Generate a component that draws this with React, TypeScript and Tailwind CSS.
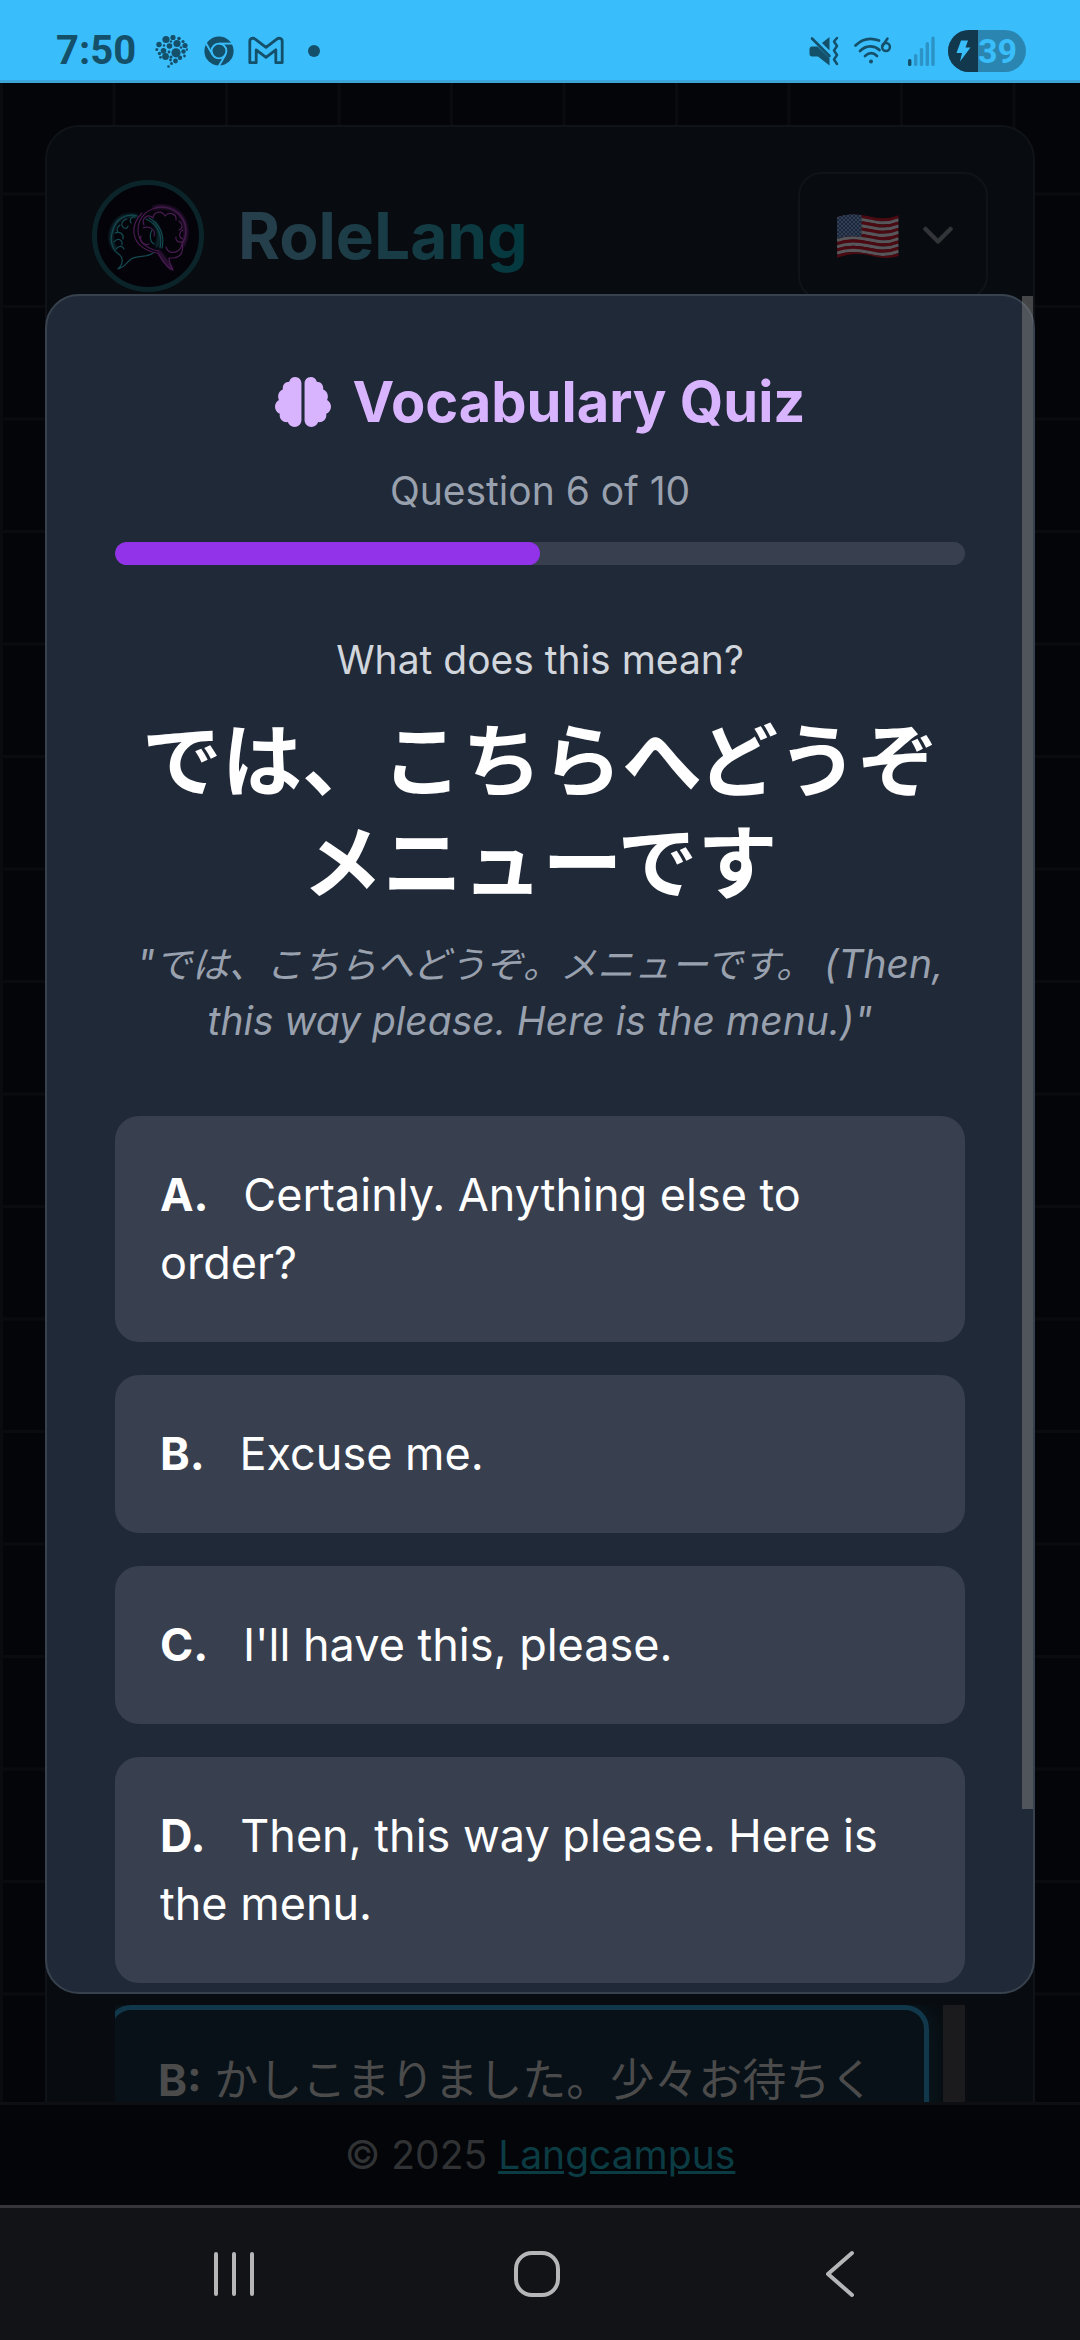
import React from "react";
import { FaBrain } from "react-icons/fa";

const CURRENT = 6;
const TOTAL = 10;

const OPTIONS = [
  { letter: "A", text: "Certainly. Anything else to order?" },
  { letter: "B", text: "Excuse me." },
  { letter: "C", text: "I'll have this, please." },
  { letter: "D", text: "Then, this way please. Here is the menu." },
];

const BUBBLE_DOTS: [number, number, number][] = [
  [11, 4.5, 3.6], [18, 2.5, 2.6], [24, 3.5, 1.8], [28, 6.5, 1.6], [4, 9.5, 2.7],
  [14.5, 11, 2.8], [22, 8.5, 3.6], [30, 10.5, 2.6], [1.8, 14.5, 1.5], [8.5, 15.8, 2.8],
  [21, 17.8, 4.6], [28.5, 16.5, 2.2], [32, 14.5, 1.2], [4.5, 18.5, 1.7], [10.5, 21.5, 3.4],
  [5.5, 22.3, 1.4], [16, 22, 1.6], [25, 22.8, 2.2], [20.5, 26, 2.4], [29.5, 21, 1.4],
  [15.5, 25, 1.4], [16.5, 28.5, 1.5], [13.5, 31.5, 1.3], [9, 10.5, 1.2], [16, 6.5, 1.2], [14, 17, 1.4], [26, 12.5, 1.3],
];

function BubbleIcon() {
  return (
    <svg viewBox="0 0 33 33" className="h-[33px] w-[33px]" fill="#14506a" aria-hidden="true">
      {BUBBLE_DOTS.map(([x, y, r], i) => (
        <circle key={i} cx={x} cy={y} r={r} />
      ))}
    </svg>
  );
}

function ChromeIcon() {
  return (
    <svg viewBox="0 0 30 30" className="h-[30px] w-[30px]" aria-hidden="true">
      <circle cx="15" cy="15" r="14.6" fill="#14506a" />
      <g stroke="#3abdfb" strokeWidth="1.9" fill="none">
        <circle cx="15" cy="15" r="7.4" />
        <path d="M15 7.6H29" />
        <path d="M15 7.6H29" transform="rotate(120 15 15)" />
        <path d="M15 7.6H29" transform="rotate(240 15 15)" />
      </g>
    </svg>
  );
}

function GmailIcon() {
  return (
    <svg viewBox="0 0 36 30" className="h-[30px] w-[36px]" fill="none" stroke="#14506a" strokeWidth="2.8" strokeLinejoin="round" aria-hidden="true">
      <path d="M1.8 5.5v21.2h6.4V13.8L18 21.3l9.8-7.5v12.9h6.4V5.5c0-3.4-3.4-4-5.4-2.4L18 11.4 7.2 3.1C5.200 1.500 1.800 2.100 1.800 5.500z" />
    </svg>
  );
}

function MuteIcon() {
  return (
    <svg viewBox="0 0 30 30" className="h-[30px] w-[30px]" aria-hidden="true">
      <path d="M3 10.500h5.500L20.500 22v7.500L9 20.500H3c-1.500 0-2.500-1-2.500-2.500v-5c0-1.500 1-2.500 2.500-2.500z" fill="#14506a" />
      <path d="M20.500 1v13.500l-7.500-7.500z" fill="#14506a" />
      <path d="M3 2.500l17.500 17.500" stroke="#14506a" strokeWidth="2.600" strokeLinecap="round" />
      <path d="M28 2l-3 3.500 3 4.500-3 4.500 3 4.500-3 4.500 3 4.500" stroke="#14506a" strokeWidth="2.500" fill="none" strokeLinecap="round" strokeLinejoin="round" />
    </svg>
  );
}

function WifiIcon() {
  return (
    <svg viewBox="0 0 38 30" className="h-[30px] w-[38px]" fill="none" stroke="#14506a" strokeWidth="2.700" strokeLinecap="round" aria-hidden="true">
      <path d="M1.500 9.500C8.500 2.500 17 1.500 25 4.500" />
      <path d="M6 15C12 9 20 9 25.500 14" />
      <path d="M11 20c4-3.500 8.500-3.500 12 0" />
      <circle cx="17" cy="25.500" r="2" fill="#14506a" stroke="none" />
      <circle cx="32" cy="11" r="3.900" strokeWidth="2.500" />
      <path d="M28.300 10.200L33.500 2.500" strokeWidth="2.500" />
    </svg>
  );
}

function SignalIcon() {
  return (
    <svg viewBox="0 0 28 30" className="h-[30px] w-[28px]" aria-hidden="true">
      <rect x="1" y="23" width="3.400" height="7" rx="1.500" fill="#14506a" />
      <rect x="7" y="18" width="3.400" height="12" rx="1.500" fill="#2b93c6" />
      <rect x="12.800" y="12" width="3.400" height="18" rx="1.500" fill="#2b93c6" />
      <rect x="18.600" y="6" width="3.400" height="24" rx="1.500" fill="#2b93c6" />
      <rect x="24.300" y="0.500" width="3.400" height="29.500" rx="1.500" fill="#2b93c6" />
    </svg>
  );
}

function StatusBar() {
  return (
    <div className="flex h-[83px] items-center justify-between border-b-[3px] border-[#3da5d9] bg-[#3abdfb] pt-[22px] pr-[54px] pl-[56px]">
      <div className="flex items-center">
        <span className="mr-[19px] font-['Roboto',sans-serif] text-[40px] leading-none font-bold text-[#14506a]">7:50</span>
        <div className="mr-4"><BubbleIcon /></div>
        <div className="mr-[14px]"><ChromeIcon /></div>
        <GmailIcon />
        <span className="ml-6 h-3 w-3 rounded-full bg-[#14506a]" />
      </div>
      <div className="flex items-center">
        <div className="mr-[15px]"><MuteIcon /></div>
        <div className="mr-[15px]"><WifiIcon /></div>
        <div className="mr-[13px]"><SignalIcon /></div>
        <div className="flex h-[42px] w-[78px] items-center overflow-hidden rounded-full bg-[#2a86b1]">
          <div className="flex h-full w-[30px] shrink-0 items-center justify-center bg-[#11384c]">
            <svg viewBox="0 0 15 22" className="h-[22px] w-[15px]" fill="#3abdfb" aria-hidden="true">
              <path d="M5 0.500h7L9.500 7.500H14.500L4 21.500 6 13H0.500z" />
            </svg>
          </div>
          <span className="font-['Roboto',sans-serif] text-[34px] leading-none font-bold text-[#3abdfb]">39</span>
        </div>
      </div>
    </div>
  );
}

function Logo() {
  return (
    <div className="h-28 w-28 overflow-hidden rounded-full border-[5px] border-[#0b2429] bg-[#04030a]">
      <svg viewBox="17 25 102 102" className="h-full w-full" fill="none" strokeLinecap="round" strokeLinejoin="round" aria-hidden="true">
        <defs>
          <filter id="neon" x="-30%" y="-30%" width="160%" height="160%">
            <feGaussianBlur stdDeviation="1.8" />
          </filter>
        </defs>
        <g stroke="#17454a" strokeWidth="3" filter="url(#neon)" opacity="0.8">
          <path d="M56 56c-9-2-18 1-22 10-4 8-4 16 1 23M74 62c6 8 7 16 3 24" />
        </g>
        <g stroke="#4b1f54" strokeWidth="3" filter="url(#neon)" opacity="0.8">
          <path d="M74 48c14-4 28 3 31 17 2 8 1 14-2 20M79 92l12 16" />
        </g>
        <g stroke="#144a50" strokeWidth="1.200">
          <path d="M57 56c-11-3-21 3-24 14-3 8-2 15 2 21 5 4 8 6 7 11 0 3-2 5-4 7 6-1 9-7 13-10 7-4 16-1 22-6" />
          <path d="M55 57c-4-1-6 3-4 6M47 59c-5 1-7 6-3 9 3 1 4-1 4-2M40 65c-4 3-4 7 0 8M35 73c6-2 9 2 8 6M34 82c4-5 9-2 8 3M36 89c3-4 7-3 8 0" />
          <path d="M66 59c11 5 17 15 14 29M69 58c11 6 16 17 13 30" />
          <path d="M72 70c-3 5-2 12 2 14" />
        </g>
        <g stroke="#481c50" strokeWidth="1.200">
          <path d="M79 91c-13-2-21-10-21-21 0-13 10-22 23-23 14 0 24 10 25 23 0 6-1 10-4 13 2 8-1 14-8 15-3 0-4 0-5 0 0 5 2 8 4 12-8-3-12-12-15-17" />
          <path d="M77 93c-12-2-22-9-23-20-1-9 3-15 8-20" />
          <path d="M64 65c-3-7 4-12 9-7 1-7 9-8 12-2 4-5 12-2 11 4M99 61c4 3 4 8 0 9M103 70c-5 3-4 8 0 9M102 82c-4 1-7-2-6-5M63 68c7-3 13 2 11 8M61 76c-2 6 3 10 8 8M86 87c2 7 12 8 16-2" />
        </g>
      </svg>
    </div>
  );
}

function Flag() {
  const stripes = Array.from({ length: 13 }, (_, i) => i);
  return (
    <svg viewBox="0 0 62 46" className="h-[46px] w-[62px]" aria-hidden="true">
      <defs>
        <clipPath id="flag-shape">
          <path d="M0 4C10 0 22 1 31 3S50 7 61.500 2V43C50 47 40 44 31 42S10 41 0 45z" />
        </clipPath>
        <pattern id="stars" width="4" height="4" patternUnits="userSpaceOnUse">
          <circle cx="1" cy="1" r="0.800" fill="#4d5a6e" />
          <circle cx="3" cy="3" r="0.800" fill="#4d5a6e" />
        </pattern>
      </defs>
      <g clipPath="url(#flag-shape)">
        {stripes.map((i) => (
          <path
            key={i}
            d={`M0 ${5.600 + i * 3.150}c10-4 22-3 31-1s19 4 31-1`}
            stroke={i % 2 ? "#57565a" : "#4b0a11"}
            strokeWidth="3.300"
            fill="none"
          />
        ))}
        <path d="M0 4C8 1 16 0 24.500 2v22C16 22 8 23 0 26z" fill="#1b283c" />
        <path d="M0 4C8 1 16 0 24.500 2v22C16 22 8 23 0 26z" fill="url(#stars)" />
      </g>
    </svg>
  );
}

function AppBackground() {
  return (
    <div className="flex flex-1 flex-col bg-[#040509] bg-[linear-gradient(#0a0b0f_3px,transparent_3px),linear-gradient(90deg,#0a0b0f_3px,transparent_3px)] bg-[size:calc(100vw*5/48)_calc(100vw*5/48)] bg-[position:0_-3px]">
      <div className="mx-[45px] mt-[42px] flex flex-1 flex-col rounded-t-[34px] border-2 border-b-0 border-[#101317] bg-[#080c10]">
        <header className="flex h-[218px] items-center justify-between px-[45px]">
          <div className="flex items-center">
            <Logo />
            <h1 className="ml-[34px] bg-linear-to-r from-[#273f4c] to-[#03393f] bg-clip-text text-[64px] leading-[88px] font-bold text-transparent">
              RoleLang
            </h1>
          </div>
          <button type="button" aria-label="Select language" className="flex h-32 w-[190px] items-center justify-center gap-6 rounded-3xl border-2 border-[#101317] pl-1">
            <Flag />
            <svg viewBox="0 0 30 20" className="h-5 w-[30px]" fill="none" stroke="#323437" strokeWidth="4.500" strokeLinecap="round" strokeLinejoin="round" aria-hidden="true">
              <path d="M2.500 3L15 15.500 27.500 3" />
            </svg>
          </button>
        </header>
        <div className="flex-1" />
        <div className="mx-[68px] flex h-[97px] overflow-hidden">
          <div className="-ml-2 h-[200px] min-w-0 flex-1 rounded-3xl border-[5px] border-[#10384a] bg-[#081118] pt-[46px] pl-[46px] shadow-[0_0_30px_#0a1e26]">
            <p lang="ja" className="text-[44px] leading-[48px] whitespace-nowrap text-[#4b4b4b]">
              <strong>B:</strong> かしこまりました。少々お待ちく
            </p>
          </div>
          <div className="ml-[14px] w-[22px] bg-[#1b1b1d]" />
        </div>
      </div>
      <footer className="border-t-[3px] border-[#0d0f13] bg-[#030509] py-[22px] text-center text-[39px] leading-[56px] text-[#303234]">
        © 2025{" "}
        <a href="#langcampus" className="text-[#0c3c43] underline">Langcampus</a>
      </footer>
    </div>
  );
}

function QuizModal() {
  return (
    <div className="absolute inset-0 flex items-center justify-center px-[45px]">
      <div role="dialog" aria-labelledby="quiz-title" className="relative flex max-h-[calc(80%+3px)] w-full flex-col">
        <div className="min-h-0 overflow-hidden rounded-[34px] border-2 border-[#38414e] bg-[#202937] px-[68px] pt-[67px]">
          <div className="h-[1828px]">
            <h2 id="quiz-title" className="flex items-center justify-center gap-[22px] text-[56px] leading-[78px] font-bold text-[#d9b4fe]">
              <FaBrain className="h-14 w-14" aria-hidden="true" />
              Vocabulary Quiz
            </h2>
            <p className="mt-[22px] text-center text-[39px] leading-[56px] text-[#99a1af]">
              Question {CURRENT} of {TOTAL}
            </p>
            <div
              role="progressbar"
              aria-label="Quiz progress"
              aria-valuenow={CURRENT - 1}
              aria-valuemin={0}
              aria-valuemax={TOTAL}
              className="mt-[23px] h-[23px] overflow-hidden rounded-full bg-[#384050]"
            >
              <div className="h-full rounded-full bg-[#9233e9]" style={{ width: `${((CURRENT - 1) / TOTAL) * 100}%` }} />
            </div>
            <p className="mt-[67px] text-center text-[39px] leading-[56px] text-[#d1d5dc]">What does this mean?</p>
            <p lang="ja" className="mt-[22px] text-center text-[80px] leading-[102px] font-bold text-white">
              では、こちらへどうぞメニューです
            </p>
            <p className="mt-[22px] text-center text-[39px] leading-[56px] text-[#99a1af] italic">
              "<span lang="ja" className="text-[37px]">では、こちらへどうぞ。メニューです。</span> (Then, this way please. Here is the menu.)"
            </p>
            <div className="mt-[67px] flex flex-col gap-[33px]">
              {OPTIONS.map((o) => (
                <button
                  key={o.letter}
                  type="button"
                  className="rounded-3xl bg-[#384050] p-[45px] text-left text-[45px] leading-[68px] text-white"
                >
                  <span className="mr-[22px] font-bold">{o.letter}.</span> {o.text}
                </button>
              ))}
            </div>
          </div>
        </div>
        <div className="absolute top-[2px] right-[2px] h-[89%] w-[11px] bg-[rgba(128,128,128,0.5)]" />
      </div>
    </div>
  );
}

function NavBar() {
  return (
    <nav className="grid h-[135px] grid-cols-3 border-t-[3px] border-[#35353a] bg-[#121317] pr-[89px] pl-[83px]">
      <button type="button" aria-label="Recent apps" className="flex items-center justify-center">
        <svg viewBox="0 0 46 48" className="h-12 w-[46px]" stroke="#b6b6b8" strokeWidth="4" strokeLinecap="round" aria-hidden="true">
          <path d="M5 4V44M23 4V44M41 4V44" />
        </svg>
      </button>
      <button type="button" aria-label="Home" className="flex items-center justify-center">
        <svg viewBox="0 0 48 48" className="h-12 w-12" fill="none" stroke="#b6b6b8" strokeWidth="4" aria-hidden="true">
          <rect x="3" y="3" width="42" height="42" rx="16" />
        </svg>
      </button>
      <button type="button" aria-label="Back" className="flex items-center justify-center">
        <svg viewBox="0 0 30 48" className="h-12 w-[30px]" fill="none" stroke="#b6b6b8" strokeWidth="4" strokeLinecap="round" strokeLinejoin="round" aria-hidden="true">
          <path d="M27 3L3 24l24 21" />
        </svg>
      </button>
    </nav>
  );
}

export default function App() {
  return (
    <div className="flex min-h-screen flex-col bg-[#040509] font-['Inter','Noto_Sans_CJK_JP',sans-serif]">
      <StatusBar />
      <main className="relative flex flex-1 flex-col">
        <AppBackground />
        <QuizModal />
      </main>
      <NavBar />
    </div>
  );
}
